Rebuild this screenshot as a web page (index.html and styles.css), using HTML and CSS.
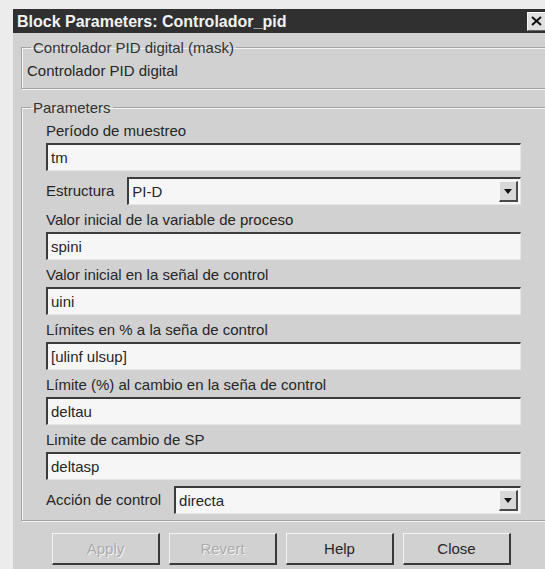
FILE: index.html
```html
<!DOCTYPE html>
<html lang="es">
<head>
<meta charset="utf-8">
<title>Block Parameters: Controlador_pid</title>
<link rel="stylesheet" href="styles.css">
</head>
<body>
<div class="dialog">
  <div class="titlebar">
    <span class="title">Block Parameters: Controlador_pid</span>
    <span class="close-btn">
      <svg width="11" height="10" viewBox="0 0 11 10"><path d="M1 1 L10 9 M10 1 L1 9" stroke="#111" stroke-width="2"/></svg>
    </span>
  </div>

  <fieldset class="group mask">
    <legend>Controlador PID digital (mask)</legend>
    <div class="desc">Controlador PID digital</div>
  </fieldset>

  <fieldset class="group params">
    <legend>Parameters</legend>
    <div class="rows">
      <div class="field">
        <div class="label">Período de muestreo</div>
        <div class="edit">tm</div>
      </div>
      <div class="combo-row">
        <span class="label">Estructura</span>
        <div class="combo"><span class="combo-text">PI-D</span><span class="drop"><svg width="8" height="5" viewBox="0 0 8 5"><path d="M0 0 H8 L4 5 Z" fill="#111"/></svg></span></div>
      </div>
      <div class="field">
        <div class="label">Valor inicial de la variable de proceso</div>
        <div class="edit">spini</div>
      </div>
      <div class="field">
        <div class="label">Valor inicial en la señal de control</div>
        <div class="edit">uini</div>
      </div>
      <div class="field">
        <div class="label">Límites en % a la seña de control</div>
        <div class="edit">[ulinf ulsup]</div>
      </div>
      <div class="field">
        <div class="label">Límite (%) al cambio en la seña de control</div>
        <div class="edit">deltau</div>
      </div>
      <div class="field">
        <div class="label">Limite de cambio de SP</div>
        <div class="edit">deltasp</div>
      </div>
      <div class="combo-row">
        <span class="label">Acción de control</span>
        <div class="combo"><span class="combo-text">directa</span><span class="drop"><svg width="8" height="5" viewBox="0 0 8 5"><path d="M0 0 H8 L4 5 Z" fill="#111"/></svg></span></div>
      </div>
    </div>
  </fieldset>

  <div class="buttons">
    <span class="btn disabled">Apply</span>
    <span class="btn disabled">Revert</span>
    <span class="btn">Help</span>
    <span class="btn">Close</span>
  </div>
</div>
</body>
</html>
```
FILE: styles.css
```css
html, body {
  margin: 0;
  height: 569px;
  overflow: hidden;
}

body {
  background: #ececec;
  font-family: "Liberation Sans", Arial, sans-serif;
  font-size: 15px;
  color: #262626;
}

.dialog {
  margin: 9px 0 0 13px;
  width: 536px;
  height: 560px;
  background: #d1d1d1;
}

/* window caption */
.titlebar {
  height: 24px;
  background: #303030;
  display: flex;
  align-items: center;
}

.title {
  padding: 2px 0 0 4px;
  color: #f2f2f2;
  font-weight: bold;
  font-size: 16px;
  line-height: 20px;
}

.close-btn {
  margin-left: auto;
  margin-right: 3px;
  width: 19px;
  height: 19px;
  box-sizing: border-box;
  background: #e0e0e0;
  border-top: 1px solid #f8f8f8;
  border-left: 1px solid #f8f8f8;
  border-right: 1px solid #666;
  border-bottom: 1px solid #666;
  display: flex;
  align-items: center;
  justify-content: center;
}

/* etched group boxes */
.group {
  margin: 0 0 0 8px;
  border: 1px solid #a4a4a4;
  box-shadow: inset 1px 1px 0 #f2f2f2, 1px 1px 0 #f2f2f2;
  min-width: 0;
}

.group legend {
  padding: 0 2px;
  line-height: 17px;
  color: #333;
}

.mask {
  margin-top: 6px;
  padding: 6px 5px 9px 5px;
}

.mask legend {
  margin-left: 4px;
}

.desc {
  line-height: 17px;
}

.params {
  margin-top: 10px;
  padding: 6px 0 6px 24px;
}

.params legend {
  margin-left: -15px;
}

.rows {
  display: flex;
  flex-direction: column;
  gap: 6px;
  width: 475px;
}

.label {
  line-height: 18px;
  white-space: nowrap;
}

.field .label {
  margin-bottom: 3px;
}

/* sunken edit fields */
.edit,
.combo {
  height: 28px;
  box-sizing: border-box;
  background: #f6f6f6;
  border-top: 2px solid #3c3c3c;
  border-left: 2px solid #3c3c3c;
  border-right: 1px solid #e6e6e6;
  border-bottom: 1px solid #e6e6e6;
}

.edit {
  padding-left: 3px;
  line-height: 25px;
}

.combo-row {
  display: flex;
  align-items: center;
  gap: 13px;
}

.combo {
  flex: 1;
  display: flex;
  align-items: center;
  padding: 0 2px 0 3px;
}

.combo-text {
  flex: 1;
}

.drop {
  width: 19px;
  height: 21px;
  box-sizing: border-box;
  background: #d8d8d8;
  border-top: 1px solid #f6f6f6;
  border-left: 1px solid #f6f6f6;
  border-right: 2px solid #4a4a4a;
  border-bottom: 2px solid #4a4a4a;
  display: flex;
  align-items: center;
  justify-content: center;
}

/* push buttons */
.buttons {
  display: flex;
  gap: 9px;
  margin: 12px 0 0 39px;
}

.btn {
  width: 108px;
  height: 32px;
  box-sizing: border-box;
  border-top: 1px solid #f4f4f4;
  border-left: 1px solid #f4f4f4;
  border-right: 2px solid #3a3a3a;
  border-bottom: 2px solid #3a3a3a;
  display: flex;
  align-items: center;
  justify-content: center;
  color: #262626;
}

.btn.disabled {
  color: #ababab;
  text-shadow: 1px 1px 0 #f4f4f4;
}
```
